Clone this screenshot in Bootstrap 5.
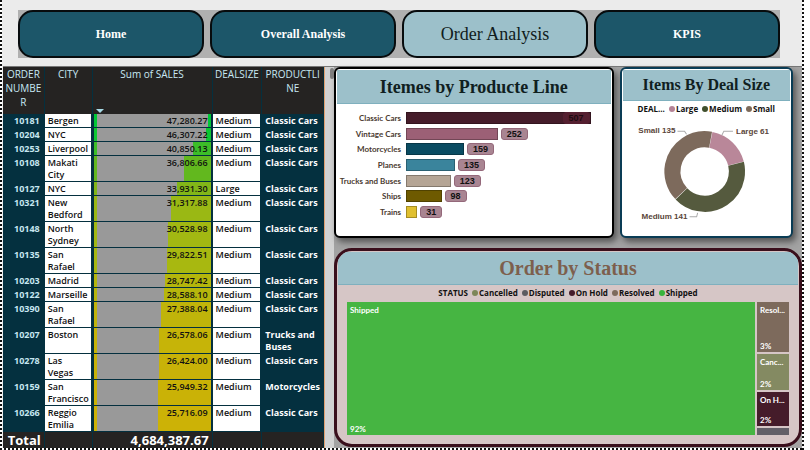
<!DOCTYPE html>
<html lang="en">
<head>
<meta charset="utf-8">
<meta name="viewport" content="width=device-width, initial-scale=1">
<title>Order Analysis</title>
<link href="https://cdn.jsdelivr.net/npm/bootstrap@5.3.0/dist/css/bootstrap.min.css" rel="stylesheet">
<style>
:root{--teal:#1c5669;--sky:#9cc0ca;--navy:#04303f}
body{font-family:"Open Sans","Noto Sans",sans-serif;font-size:9px;line-height:12px;color:#111;background:#fff}
.frame{min-height:100vh;margin-right:6px;padding:0 2px 2px 3px;
 background:
 repeating-linear-gradient(180deg,#111 0 2px,#fff 2px 4px) left top/2px 100% no-repeat,
 repeating-linear-gradient(180deg,#111 0 2px,#fff 2px 4px) right top/2px 100% no-repeat,
 repeating-linear-gradient(90deg,#111 0 2px,#fff 2px 4px) left bottom/100% 2px no-repeat,#ebebeb}
.serif{font-family:"Liberation Serif",serif}
.pages{margin:10px 22px 8px 15px;background:#b0b0b0;gap:6px}
.pages a{height:48px;border:2px solid #070b0d;border-radius:15px;background:var(--teal);color:#fff;font-size:12px;font-weight:700;text-decoration:none}
.pages a.active{background:var(--sky);color:#101c20;font-size:18px;font-weight:400}
.board{background:#a3a3a3;border-top:1px solid #777}
.grid-side{flex:321 1 0;min-width:0;background:var(--navy)}
.chart-side{flex:468 1 0;min-width:0;padding:0 0 1px 0;gap:10px}
.gutter{width:10px;border-left:1px solid #e0a070;background:#d2d2d2;padding:1px 0 0 5px}
.thumb{width:4px;height:11px;border-radius:2px;background:#808080}
.orders{width:100%;table-layout:fixed;border-collapse:separate;border-spacing:0;font-weight:600}
.orders th,.orders td{vertical-align:top;padding:1px 3px 0;border-right:2px solid var(--navy);border-bottom:1px solid var(--navy)}
.orders thead th{height:47px;background:#252322;color:#c8e8f4;font-size:10px;line-height:14px;font-weight:400;text-align:center;padding:0 2px;word-break:break-all;border-right-width:1px;border-bottom:0}
.orders tbody th{color:#c6e6f0;text-align:right;font-weight:700}
.orders tbody td{background:#fff}
.orders tbody td.sale{text-align:right;font-weight:600;border-left:1px solid var(--navy);
 background:linear-gradient(90deg,var(--heat) 3px,#999 3px,#999 calc(3px + var(--bar)),var(--heat) 0)}
.orders tbody td.line{background:var(--navy);color:#fff;font-weight:700;border-right:0}
.orders tfoot th,.orders tfoot td{background:#252322;color:#fff;font-size:13px;line-height:16px;font-weight:700;padding:0 3px;text-align:right;border-bottom:0;border-right-width:1px}
.sort{display:block;width:0;margin:28px 0 0 1px;border:4px solid transparent;border-top-color:#a8dce8;border-bottom:0}
.tiles{gap:6px}
.tile{background:#fff;border:2px solid #000;border-radius:6px;box-shadow:3px 4px 6px #555;min-width:0}
.tile h2{margin:0;background:var(--sky);color:#10201f;font-weight:700;text-align:center;border-bottom:1px solid #7fb0be}
.tile-line{flex:281 1 0;padding:1px}
.tile-line h2{font-size:18px;line-height:32px;padding-top:1px}
.tile-deal{flex:172 1 0;border-color:#0a3c55;margin-right:9px;padding:1px}
.tile-deal h2{font-size:16px;line-height:30px}
.tile-status{border:3px solid #3a0f1c;border-radius:18px;background:#d6c6c6;box-shadow:none;padding:1px;overflow:hidden}
.tile-status h2{font-size:20px;line-height:32px;color:#7d5f4d}
.bars{padding:8px 20px 17px 2px;font-family:Lato,sans-serif;font-size:8px;font-weight:700;color:#4a3a30}
.bar-name{width:62px;text-align:right;margin-right:5px;white-space:nowrap}
.bar-fill{height:12px;border:1px solid #0004}
.chip{background:#a98592;border:1px solid #94687a;border-radius:3px;padding:0 5px;font:700 9px/10px "Liberation Sans",sans-serif;color:#111;margin-left:3px}
.chip-in{margin:-1px 0 0 auto;background:#541f30;border-color:#541f30;color:#1d0a10;width:fit-content}
.keys{font-size:8px;font-weight:700;gap:4px;line-height:12px;white-space:nowrap;padding-top:2px}
.dot{display:inline-block;width:6px;height:6px;border-radius:50%;margin-right:1px}
.ring text{font:700 8px "Liberation Sans",sans-serif;fill:#5a463a}
.tree{padding:3px 9px 8px 9px;gap:2px;font-family:Lato,sans-serif;font-size:8px;line-height:10px;font-weight:700;color:#fff}
.leaf{padding:3px 3px 1px;overflow:hidden;min-height:0;white-space:nowrap}
.minor{width:32px;gap:2px}
</style>
<script src="https://cdn.jsdelivr.net/npm/bootstrap@5.3.0/dist/js/bootstrap.bundle.min.js"></script>
</head>
<body>
<div class="frame d-flex flex-column">
<nav class="pages d-flex serif" aria-label="Pages">
 <a class="d-flex flex-fill w-25 align-items-center justify-content-center" href="#">Home</a>
 <a class="d-flex flex-fill w-25 align-items-center justify-content-center" href="#">Overall Analysis</a>
 <a class="active d-flex flex-fill w-25 align-items-center justify-content-center" href="#" aria-current="page">Order Analysis</a>
 <a class="d-flex flex-fill w-25 align-items-center justify-content-center" href="#">KPIS</a>
</nav>
<main class="board d-flex flex-fill">
<section class="grid-side">
<table class="orders">
<colgroup><col style="width:13%"><col style="width:14.9%"><col style="width:37.4%"><col style="width:15.5%"><col style="width:19.2%"></colgroup>
<thead><tr><th>ORDERNUMBER</th><th>CITY</th><th>Sum of SALES<span class="sort"></span></th><th class="text-nowrap">DEALSIZE</th><th>PRODUCTLINE</th></tr></thead>
<tbody>
<tr><th>10181</th><td>Bergen</td><td class="sale" style="--bar:95%;--heat:#00c836">47,280.27</td><td>Medium</td><td class="line">Classic Cars</td></tr>
<tr><th>10204</th><td>NYC</td><td class="sale" style="--bar:93%;--heat:#0cc832">46,307.22</td><td>Medium</td><td class="line">Classic Cars</td></tr>
<tr><th>10253</th><td>Liverpool</td><td class="sale" style="--bar:82%;--heat:#3cbe28">40,850.13</td><td>Medium</td><td class="line">Classic Cars</td></tr>
<tr><th>10108</th><td>Makati City</td><td class="sale" style="--bar:74%;--heat:#62b81e">36,806.66</td><td>Medium</td><td class="line">Classic Cars</td></tr>
<tr><th>10127</th><td>NYC</td><td class="sale" style="--bar:68%;--heat:#82b618">33,931.30</td><td>Large</td><td class="line">Classic Cars</td></tr>
<tr><th>10321</th><td>New Bedford</td><td class="sale" style="--bar:63%;--heat:#9ab814">31,317.88</td><td>Medium</td><td class="line">Classic Cars</td></tr>
<tr><th>10148</th><td>North Sydney</td><td class="sale" style="--bar:61%;--heat:#a2b812">30,528.98</td><td>Medium</td><td class="line">Classic Cars</td></tr>
<tr><th>10135</th><td>San Rafael</td><td class="sale" style="--bar:60%;--heat:#a8b810">29,822.51</td><td>Medium</td><td class="line">Classic Cars</td></tr>
<tr><th>10203</th><td>Madrid</td><td class="sale" style="--bar:58%;--heat:#b4b60c">28,747.42</td><td>Medium</td><td class="line">Classic Cars</td></tr>
<tr><th>10122</th><td>Marseille</td><td class="sale" style="--bar:57%;--heat:#b6b60c">28,588.10</td><td>Medium</td><td class="line">Classic Cars</td></tr>
<tr><th>10390</th><td>San Rafael</td><td class="sale" style="--bar:55%;--heat:#c0b40a">27,388.04</td><td>Medium</td><td class="line">Classic Cars</td></tr>
<tr><th>10207</th><td>Boston</td><td class="sale" style="--bar:53%;--heat:#c6b408">26,578.06</td><td>Medium</td><td class="line">Trucks and Buses</td></tr>
<tr><th>10278</th><td>Las Vegas</td><td class="sale" style="--bar:53%;--heat:#c8b208">26,424.00</td><td>Medium</td><td class="line">Classic Cars</td></tr>
<tr><th>10159</th><td>San Francisco</td><td class="sale" style="--bar:52%;--heat:#cab206">25,949.32</td><td>Medium</td><td class="line">Motorcycles</td></tr>
<tr><th>10266</th><td>Reggio Emilia</td><td class="sale" style="--bar:52%;--heat:#ccb206">25,716.09</td><td>Medium</td><td class="line">Classic Cars</td></tr>
</tbody>
<tfoot><tr><th>Total</th><td></td><td>4,684,387.67</td><td></td><td></td></tr></tfoot>
</table>
</section>
<div class="gutter"><div class="thumb"></div></div>
<section class="chart-side d-flex flex-column">
 <div class="tiles d-flex">
  <article class="tile tile-line d-flex flex-column">
   <h2 class="serif">Itemes by Producte Line</h2>
   <div class="bars d-flex flex-column flex-fill justify-content-between">
    <div class="d-flex align-items-center"><span class="bar-name">Classic Cars</span><div class="flex-fill"><div class="bar-fill" style="width:100%;background:#451c2a"><div class="chip chip-in">507</div></div></div></div>
    <div class="d-flex align-items-center"><span class="bar-name">Vintage Cars</span><div class="flex-fill d-flex"><div class="bar-fill" style="width:49.7%;background:#9c6076"></div><span class="chip">252</span></div></div>
    <div class="d-flex align-items-center"><span class="bar-name">Motorcycles</span><div class="flex-fill d-flex"><div class="bar-fill" style="width:31.4%;background:#0a4c62"></div><span class="chip">159</span></div></div>
    <div class="d-flex align-items-center"><span class="bar-name">Planes</span><div class="flex-fill d-flex"><div class="bar-fill" style="width:26.6%;background:#3a849c"></div><span class="chip">135</span></div></div>
    <div class="d-flex align-items-center"><span class="bar-name">Trucks and Buses</span><div class="flex-fill d-flex"><div class="bar-fill" style="width:24.3%;background:#b5a595"></div><span class="chip">123</span></div></div>
    <div class="d-flex align-items-center"><span class="bar-name">Ships</span><div class="flex-fill d-flex"><div class="bar-fill" style="width:19.3%;background:#6e5a00"></div><span class="chip">98</span></div></div>
    <div class="d-flex align-items-center"><span class="bar-name">Trains</span><div class="flex-fill d-flex"><div class="bar-fill" style="width:6.1%;background:#e0c030"></div><span class="chip">31</span></div></div>
   </div>
  </article>
  <article class="tile tile-deal">
   <h2 class="serif">Items By Deal Size</h2>
   <div class="keys d-flex justify-content-center"><span>DEAL...</span><span><i class="dot" style="background:#b48296"></i>Large</span><span><i class="dot" style="background:#3f4f2c"></i>Medium</span><span><i class="dot" style="background:#7d6a5a"></i>Small</span></div>
   <svg class="ring d-block w-100" viewBox="0 0 166 119" role="img" aria-label="Items by deal size">
    <g fill="none" stroke-width="16" transform="rotate(-79 81 56)">
     <circle cx="81" cy="56" r="32" stroke="#b98799" pathLength="337" stroke-dasharray="60.5 276.5"/>
     <circle cx="81" cy="56" r="32" stroke="#555a3e" pathLength="337" stroke-dasharray="140.5 196.5" stroke-dashoffset="-61"/>
     <circle cx="81" cy="56" r="32" stroke="#7d6a5c" pathLength="337" stroke-dasharray="134.5 202.5" stroke-dashoffset="-202"/>
    </g>
    <path d="M54 16h7l2 3M109 16h-9l-2 4M66 101h7l1-4" fill="none" stroke="#aaa"/>
    <text x="52" y="18" text-anchor="end">Small 135</text>
    <text x="112" y="19">Large 61</text>
    <text x="64" y="103" text-anchor="end">Medium 141</text>
   </svg>
  </article>
 </div>
 <article class="tile tile-status d-flex flex-column flex-fill">
  <h2 class="serif">Order by Status</h2>
  <div class="keys d-flex justify-content-center"><span>STATUS</span><span><i class="dot" style="background:#7d8758"></i>Cancelled</span><span><i class="dot" style="background:#5c5c60"></i>Disputed</span><span><i class="dot" style="background:#451c2a"></i>On Hold</span><span><i class="dot" style="background:#7d6a5c"></i>Resolved</span><span><i class="dot" style="background:#38b43c"></i>Shipped</span></div>
  <div class="tree d-flex flex-fill">
   <div class="leaf flex-fill d-flex flex-column justify-content-between" style="background:#46b542"><span>Shipped</span><span>92%</span></div>
   <div class="minor d-flex flex-column">
    <div class="leaf d-flex flex-column justify-content-between" style="flex:50 1 0;background:#7d6a5c"><span>Resol...</span><span>3%</span></div>
    <div class="leaf d-flex flex-column justify-content-between" style="flex:35 1 0;background:#848a62"><span>Canc...</span><span>2%</span></div>
    <div class="leaf d-flex flex-column justify-content-between" style="flex:33 1 0;background:#451c2a"><span>On H...</span><span>2%</span></div>
    <div class="leaf" style="flex:3 1 0;background:#636068"></div>
   </div>
  </div>
 </article>
</section>
</main>
</div>
</body>
</html>
